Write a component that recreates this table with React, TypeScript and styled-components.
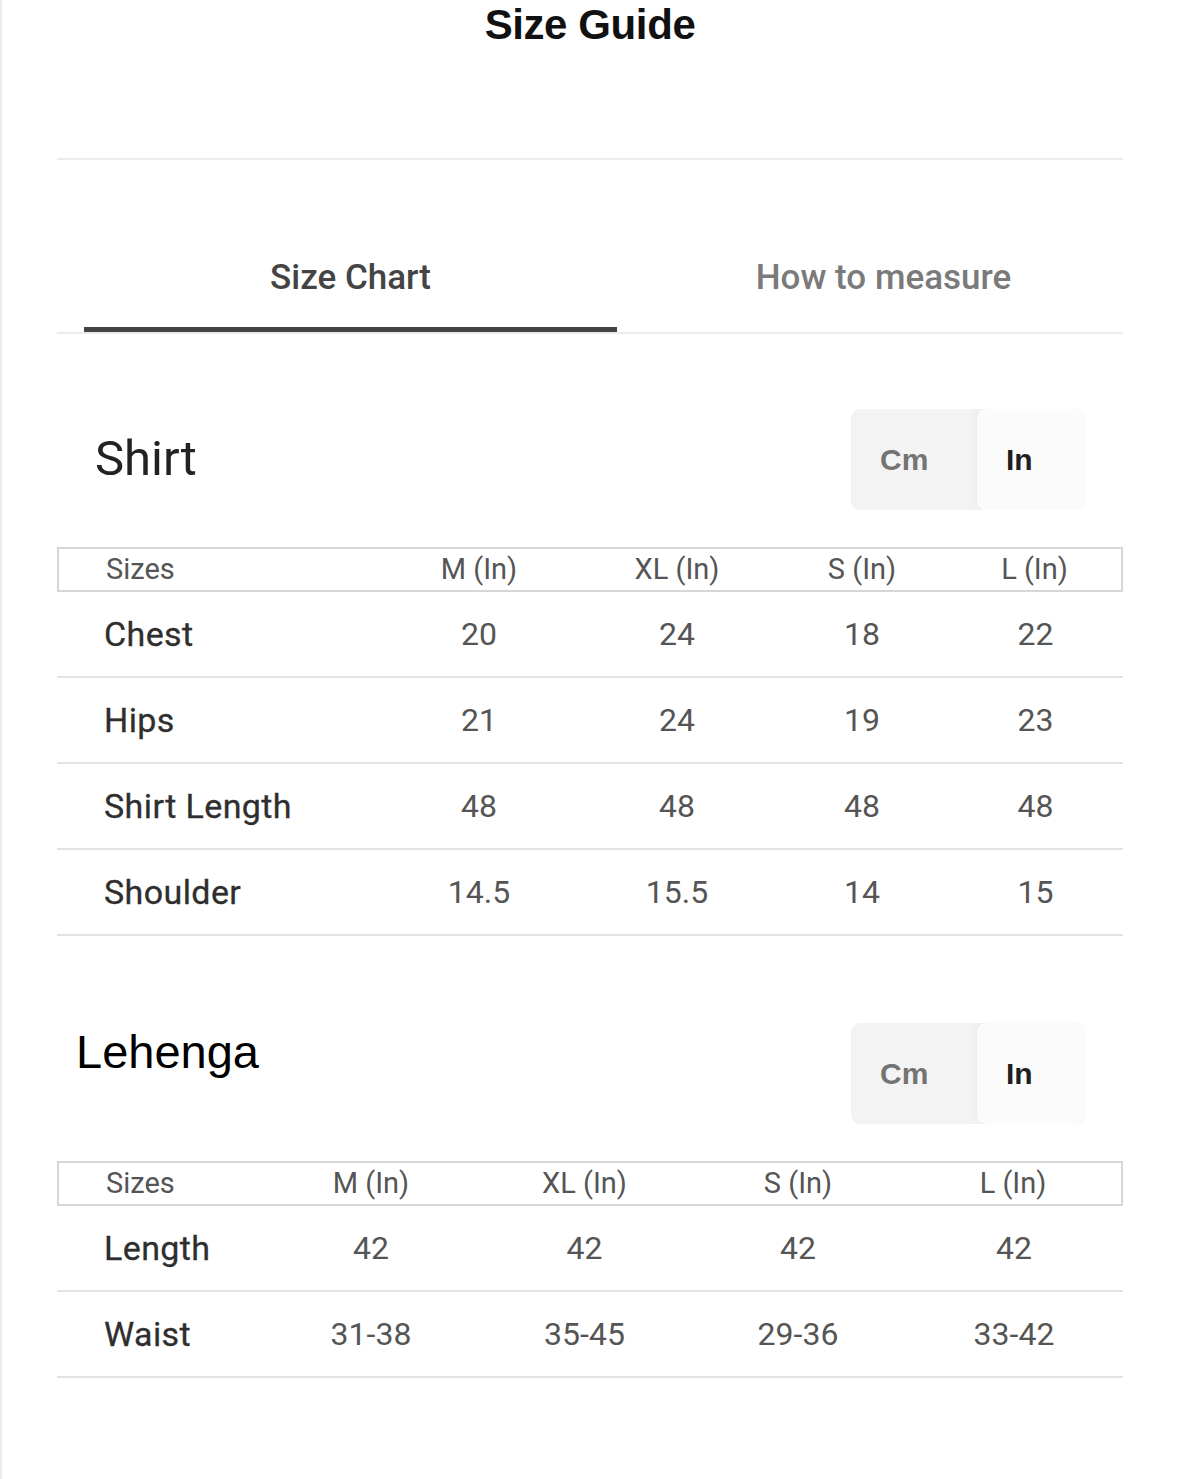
import styled, { createGlobalStyle } from "styled-components";

const GlobalStyle = createGlobalStyle`
  html, body {
    margin: 0;
    padding: 0;
    background: #ffffff;
  }
  body {
    font-family: Roboto, "Liberation Sans", Arial, sans-serif;
    color: #333;
  }
`;

const Page = styled.div`
  min-height: 1479px;
  border-left: 2px solid #ececec;
  box-sizing: border-box;
  padding: 0 56px 0 55px;
  overflow: hidden;
`;

const Heading = styled.h1`
  margin: 0;
  height: 50px;
  line-height: 50px;
  text-align: center;
  font-family: "Liberation Sans", Arial, sans-serif;
  font-weight: 700;
  font-size: 42px;
  letter-spacing: -0.4px;
  color: #111;
`;

const Divider = styled.div`
  margin-top: 108px;
  height: 2px;
  background: #ececec;
`;

const TabBar = styled.div`
  display: flex;
  padding-left: 27px;
  border-bottom: 2px solid #ececec;
`;

const Tab = styled.div<{ $active?: boolean }>`
  flex: none;
  width: 533px;
  padding: 98px 0 29px;
  line-height: 40px;
  text-align: center;
  font-size: 35px;
  font-weight: 500;
  color: ${({ $active }) => ($active ? "#444" : "#7a7a7a")};
  border-bottom: 5px solid ${({ $active }) => ($active ? "#444" : "transparent")};
`;

const SectionHead = styled.div<{ $gap: number }>`
  display: flex;
  justify-content: space-between;
  align-items: flex-start;
  margin-top: ${({ $gap }) => $gap}px;
  padding-right: 37px;
`;

const SectionTitle = styled.h2<{ $indent: number; $top: number; $dark?: boolean }>`
  margin: 0;
  padding-left: ${({ $indent }) => $indent}px;
  margin-top: ${({ $top }) => $top}px;
  font-weight: 400;
  font-size: ${({ $dark }) => ($dark ? "47px" : "49px")};
  line-height: 58px;
  font-family: ${({ $dark }) =>
    $dark ? `"Liberation Sans", Arial, sans-serif` : `Roboto, "Liberation Sans", sans-serif`};
  color: ${({ $dark }) => ($dark ? "#000" : "#222")};
`;

const Toggle = styled.div`
  display: flex;
  width: 235px;
  height: 101px;
  border-radius: 9px;
  background: #f3f3f3;
  overflow: hidden;
`;

const ToggleOption = styled.div<{ $active?: boolean; $width: number }>`
  width: ${({ $width }) => $width}px;
  box-sizing: border-box;
  padding-left: 29px;
  display: flex;
  align-items: center;
  font-family: "Liberation Sans", Arial, sans-serif;
  font-weight: 700;
  font-size: 30px;
  border-radius: 9px;
  color: ${({ $active }) => ($active ? "#1f1f1f" : "#737373")};
  background: ${({ $active }) => ($active ? "#fbfbfb" : "transparent")};
  box-shadow: ${({ $active }) => ($active ? "-3px 0 6px rgba(0,0,0,0.03)" : "none")};
`;

const Table = styled.div<{ $cols: string }>`
  display: grid;
  grid-template-columns: ${({ $cols }) => $cols};
  margin-top: 37px;
`;

const HeadCell = styled.div<{ $first?: boolean; $last?: boolean }>`
  height: 41px;
  line-height: 41px;
  border-top: 2px solid #d6d6d6;
  border-bottom: 2px solid #d6d6d6;
  border-left: ${({ $first }) => ($first ? "2px solid #d6d6d6" : "none")};
  border-right: ${({ $last }) => ($last ? "2px solid #d6d6d6" : "none")};
  padding-left: ${({ $first }) => ($first ? "47px" : "0")};
  text-align: ${({ $first }) => ($first ? "left" : "center")};
  font-size: 29px;
  color: #555;
`;

const Cell = styled.div<{ $label?: boolean }>`
  height: 84px;
  line-height: 84px;
  border-bottom: 2px solid #e3e3e3;
  padding-left: ${({ $label }) => ($label ? "47px" : "0")};
  text-align: ${({ $label }) => ($label ? "left" : "center")};
  font-size: ${({ $label }) => ($label ? "34px" : "32px")};
  letter-spacing: ${({ $label }) => ($label ? "0.4px" : "0")};
  font-weight: 400;
  color: ${({ $label }) => ($label ? "#2e2e2e" : "#555")};
  -webkit-text-stroke: ${({ $label }) => ($label ? "0.3px #2e2e2e" : "0")};
  white-space: nowrap;
`;

interface SizeTableProps {
  cols: string;
  sizes: string[];
  rows: { label: string; values: string[] }[];
}

function SizeTable(props: SizeTableProps) {
  return (
    <Table $cols={props.cols}>
      <HeadCell $first>Sizes</HeadCell>
      {props.sizes.map((s, i) => (
        <HeadCell key={s} $last={i === props.sizes.length - 1}>
          {s} (In)
        </HeadCell>
      ))}
      {props.rows.map((row) => [
        <Cell $label key={row.label}>
          {row.label}
        </Cell>,
        ...row.values.map((v, i) => <Cell key={row.label + i}>{v}</Cell>),
      ])}
    </Table>
  );
}

function UnitToggle() {
  return (
    <Toggle>
      <ToggleOption $width={126}>Cm</ToggleOption>
      <ToggleOption $width={109} $active>
        In
      </ToggleOption>
    </Toggle>
  );
}

const sizes = ["M", "XL", "S", "L"];

const shirtRows = [
  { label: "Chest", values: ["20", "24", "18", "22"] },
  { label: "Hips", values: ["21", "24", "19", "23"] },
  { label: "Shirt Length", values: ["48", "48", "48", "48"] },
  { label: "Shoulder", values: ["14.5", "15.5", "14", "15"] },
];

const lehengaRows = [
  { label: "Length", values: ["42", "42", "42", "42"] },
  { label: "Waist", values: ["31-38", "35-45", "29-36", "33-42"] },
];

export default function App() {
  return (
    <>
      <GlobalStyle />
      <Page>
        <Heading>Size Guide</Heading>
        <Divider />
        <TabBar>
          <Tab $active>Size Chart</Tab>
          <Tab>How to measure</Tab>
        </TabBar>

        <SectionHead $gap={75}>
          <SectionTitle $indent={38} $top={21}>
            Shirt
          </SectionTitle>
          <UnitToggle />
        </SectionHead>
        <SizeTable cols="323px 198px 198px 172px 175px" sizes={sizes} rows={shirtRows} />

        <SectionHead $gap={87}>
          <SectionTitle $indent={19} $top={0} $dark>
            Lehenga
          </SectionTitle>
          <UnitToggle />
        </SectionHead>
        <SizeTable cols="207px 214px 213px 214px 218px" sizes={sizes} rows={lehengaRows} />
      </Page>
    </>
  );
}
